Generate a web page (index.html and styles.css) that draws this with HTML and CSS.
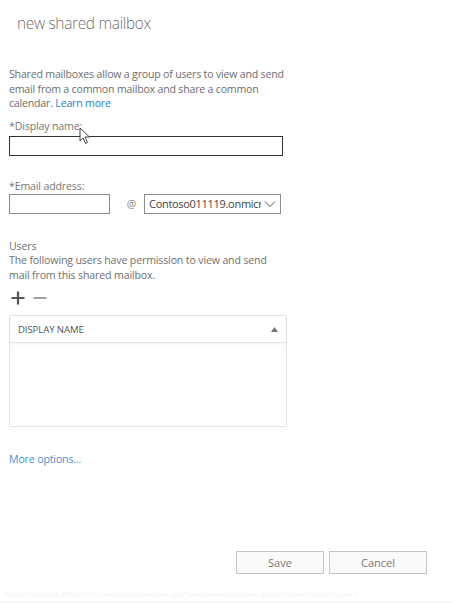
FILE: index.html
```html
<!DOCTYPE html>
<html lang="en">
<head>
<meta charset="utf-8">
<title>new shared mailbox</title>
<link rel="stylesheet" href="styles.css">
</head>
<body>
<div class="page">
  <h1 class="title">new shared mailbox</h1>
  <div class="content">
    <p class="intro">Shared mailboxes allow a group of users to view and send email from a common mailbox and share a common calendar. <a class="link" href="#">Learn more</a></p>

    <div class="field field-display">
      <label class="label">*Display name:</label>
      <div class="input input-wide"></div>
      <svg class="cursor" width="12" height="18" viewBox="0 0 12 18"><path d="M1 1 L1 14 L4 11 L6.5 16.5 L8.5 15.5 L6 10 L10.5 10 Z" fill="#fff" stroke="#444" stroke-width="1"/></svg>
    </div>

    <div class="field field-email">
      <label class="label">*Email address:</label>
      <div class="email-row">
        <div class="input input-short"></div>
        <span class="at">@</span>
        <div class="select">
          <span class="select-text">Contoso011119.onmicrosoft.com</span>
          <svg class="chev" width="12" height="8" viewBox="0 0 12 8"><path d="M1 1.5 L6 6.5 L11 1.5" fill="none" stroke="#555" stroke-width="1"/></svg>
        </div>
      </div>
    </div>

    <div class="users">
      <div class="users-title">Users</div>
      <div class="users-desc">The following users have permission to view and send mail from this shared mailbox.</div>
      <div class="tools">
        <svg class="tool" width="16" height="16" viewBox="0 0 16 16"><path d="M8 1.5 V14.5 M1.5 8 H14.5" stroke="#555" stroke-width="2.2"/></svg>
        <svg class="tool" width="16" height="16" viewBox="0 0 16 16"><path d="M1.5 8 H14.5" stroke="#8a8a8a" stroke-width="1.6"/></svg>
      </div>
      <div class="table">
        <div class="thead">
          <span class="th">DISPLAY NAME</span>
          <svg class="sort" width="7" height="5" viewBox="0 0 7 5"><path d="M0 5 L3.5 0 L7 5 Z" fill="#777"/></svg>
        </div>
        <div class="tbody"></div>
      </div>
    </div>

    <a class="more" href="#">More options...</a>
  </div>

  <div class="buttons">
    <button class="btn">Save</button>
    <button class="btn btn-cancel">Cancel</button>
  </div>
  <div class="status">https://outlook.office365.com/ecp/UsersGroups/NewSharedMailbox.aspx?ReturnObjectType=1</div>
</div>
</body>
</html>
```

FILE: styles.css
```css
* { box-sizing: border-box; }
html, body { margin: 0; padding: 0; background: #fff; }
body {
  width: 452px;
  height: 603px;
  overflow: hidden;
  font-family: "Segoe UI", "Open Sans", "Noto Sans", sans-serif;
  color: #666;
}
.page {
  position: relative;
  height: 603px;
  display: flex;
  flex-direction: column;
}
.title {
  margin: 0;
  padding: 13px 0 0 17px;
  font-size: 15.5px;
  font-weight: 300;
  color: #707070;
  line-height: 20px;
  letter-spacing: -0.35px;
}
.content {
  padding: 0 0 0 9px;
}
.intro {
  margin: 34px 0 0 0;
  width: 292px;
  font-size: 10.6px;
  line-height: 14.6px;
  letter-spacing: -0.2px;
  color: #6e6e6e;
}
.link { color: #2f7bc4; text-decoration: none; }
.label {
  display: block;
  font-size: 10.6px;
  line-height: 14px;
  letter-spacing: -0.15px;
  color: #777;
}
.field-display { position: relative; margin-top: 8px; }
.input {
  height: 20px;
  border: 1px solid #888;
  background: #fff;
}
.input-wide {
  margin-top: 3px;
  width: 274px;
  border: 1.5px solid #333;
}
.cursor { position: absolute; left: 70px; top: 8px; }
.field-email { margin-top: 23px; }
.email-row {
  margin-top: 1px;
  display: flex;
  align-items: center;
}
.input-short { width: 101px; border-color: #8c8c8c; }
.at {
  width: 34px;
  padding-left: 9px;
  text-align: center;
  font-size: 10.6px;
  color: #888;
}
.select {
  width: 137px;
  height: 20px;
  border: 1px solid #8c8c8c;
  display: flex;
  align-items: center;
  padding: 0 4px 0 4px;
  overflow: hidden;
}
.select-text {
  flex: 1;
  min-width: 0;
  overflow: hidden;
  white-space: nowrap;
  font-size: 11px;
  letter-spacing: -0.3px;
  color: #444;
}
.chev { margin-left: 3px; flex: none; }
.users { margin-top: 25px; }
.users-title, .users-desc {
  font-size: 10.6px;
  line-height: 14.5px;
  letter-spacing: -0.15px;
  color: #707070;
}
.users-desc { width: 280px; }
.tools {
  display: flex;
  gap: 6px;
  margin-top: 8px;
  padding-left: 1px;
}
.table {
  margin-top: 9px;
  width: 278px;
  border: 1px solid #e2e2e2;
}
.thead {
  height: 27px;
  display: flex;
  align-items: center;
  justify-content: space-between;
  padding: 0 8px 0 8px;
  border-bottom: 1px solid #e6e6e6;
  box-shadow: 0 1px 2px rgba(0,0,0,0.06);
}
.th {
  font-size: 9.6px;
  color: #555;
  letter-spacing: -0.1px;
}
.tbody { height: 83px; }
.more {
  display: inline-block;
  margin-top: 25px;
  font-size: 10.6px;
  letter-spacing: -0.15px;
  color: #4b8fd1;
  text-decoration: none;
}
.buttons {
  margin-top: auto;
  display: flex;
  justify-content: flex-end;
  gap: 5px;
  padding-right: 25px;
}
.btn {
  height: 23px;
  border: 1px solid #c4c4c4;
  background: #fafafa;
  font-family: inherit;
  font-size: 11px;
  color: #777;
  padding: 0;
}
.btn:first-child { width: 88px; }
.btn-cancel { width: 98px; }
.status {
  margin-top: 14px;
  height: 15px;
  padding-left: 4px;
  font-size: 8px;
  line-height: 12px;
  color: #f3f3f3;
  white-space: nowrap;
  overflow: hidden;
  border-bottom: 1px solid #f4f4f4;
}
```
